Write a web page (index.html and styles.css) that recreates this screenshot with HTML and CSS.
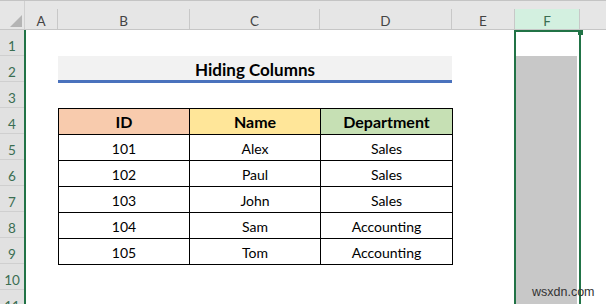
FILE: index.html
```html
<!DOCTYPE html>
<html>
<head>
<meta charset="utf-8">
<link rel="stylesheet" href="styles.css">
</head>
<body>
<div class="app">
  <div class="colhead">
    <div class="corner">
      <svg class="tri" width="12" height="12" viewBox="0 0 12 12"><polygon points="12,0 12,12 0,12" fill="#b4b4b4"/></svg>
    </div>
    <div class="ch w-a">A</div>
    <div class="ch w-b">B</div>
    <div class="ch w-c">C</div>
    <div class="ch w-d">D</div>
    <div class="ch w-e">E</div>
    <div class="ch w-f selhead">F</div>
    <div class="ch w-g"></div>
  </div>
  <div class="body">
    <div class="rowhead">
      <div class="rh">1</div>
      <div class="rh">2</div>
      <div class="rh">3</div>
      <div class="rh">4</div>
      <div class="rh">5</div>
      <div class="rh">6</div>
      <div class="rh">7</div>
      <div class="rh">8</div>
      <div class="rh">9</div>
      <div class="rh">10</div>
      <div class="rh">11</div>
    </div>
    <div class="sheet">
      <div class="title">Hiding Columns</div>
      <table class="data">
        <colgroup><col class="c1"><col class="c2"><col class="c3"></colgroup>
        <tr class="hdr"><th class="h-id">ID</th><th class="h-name">Name</th><th class="h-dept">Department</th></tr>
        <tr><td>101</td><td>Alex</td><td>Sales</td></tr>
        <tr><td>102</td><td>Paul</td><td>Sales</td></tr>
        <tr><td>103</td><td>John</td><td>Sales</td></tr>
        <tr><td>104</td><td>Sam</td><td>Accounting</td></tr>
        <tr><td>105</td><td>Tom</td><td>Accounting</td></tr>
      </table>
      <div class="sel">
        <div class="sel-blank"></div>
        <div class="sel-fill"></div>
        <div class="handle"></div>
      </div>
    </div>
  </div>
  <div class="wm">wsxdn.com</div>
</div>
</body>
</html>
```
FILE: styles.css
```css
html, body {
  margin: 0;
  padding: 0;
  background: #ffffff;
}
body {
  font-family: "Lato", "Liberation Sans", sans-serif;
  width: 606px;
  height: 304px;
  overflow: hidden;
}
.app {
  position: relative;
  width: 606px;
  height: 304px;
  overflow: hidden;
}
.colhead {
  display: flex;
  align-items: flex-end;
  height: 30px;
  box-sizing: border-box;
  background: #e6e6e6;
  border-top: 1px solid #c4c4c4;
  border-bottom: 1px solid #c6c6c6;
}
.corner {
  position: relative;
  width: 25px;
  align-self: stretch;
  box-sizing: border-box;
  border-right: 1px solid #d0d0d0;
  flex-shrink: 0;
}
.tri {
  position: absolute;
  left: 10px;
  top: 14px;
}
.ch {
  height: 20px;
  box-sizing: border-box;
  border-right: 1px solid #c8c8c8;
  display: flex;
  align-items: center;
  justify-content: center;
  padding-top: 3px;
  font-size: 13.5px;
  color: #444444;
  flex-shrink: 0;
}
.w-a { width: 33px; }
.w-b { width: 132px; }
.w-c { width: 130px; }
.w-d { width: 132px; }
.w-e { width: 63px; }
.w-f { width: 65px; }
.w-g { flex: 1; border-right: none; }
.selhead {
  background: #d3f0e0;
  color: #3a6e52;
}
.body {
  display: flex;
  height: 274px;
}
.rowhead {
  width: 24px;
  flex-shrink: 0;
  background: #e1e1e1;
  border-right: 2px solid #217346;
}
.rh {
  height: 26px;
  box-sizing: border-box;
  border-bottom: 1px solid #cfcfcf;
  display: flex;
  align-items: flex-end;
  justify-content: center;
  padding-bottom: 2px;
  font-size: 13.5px;
  line-height: 1;
  color: #3a6e52;
}
.sheet {
  flex: 1;
  display: grid;
  grid-template-columns: 32px 132px 130px 132px 63px 65px 1fr;
  grid-template-rows: repeat(11, 26px);
}
.title {
  grid-column: 2 / 5;
  grid-row: 2;
  align-self: start;
  height: 27px;
  box-sizing: border-box;
  background: #f2f2f2;
  border-bottom: 3px solid #4a72bd;
  display: flex;
  align-items: center;
  justify-content: center;
  padding-top: 3px;
  font-weight: 700;
  font-size: 17px;
  color: #000000;
}
.data {
  grid-column: 2 / 5;
  grid-row: 4 / 10;
  align-self: start;
  border-collapse: collapse;
  table-layout: fixed;
  width: 394px;
}
.c1 { width: 131px; }
.c2 { width: 131px; }
.c3 { width: 132px; }
.data tr { height: 26px; }
.data th, .data td {
  border: 1px solid #000000;
  padding: 0;
  text-align: center;
  vertical-align: middle;
  color: #000000;
}
.data td {
  font-size: 14px;
  padding-top: 1px;
}
.data th {
  font-size: 16px;
  font-weight: 700;
}
.h-id { background: #f8cbad; }
.h-name { background: #ffe699; }
.h-dept { background: #c6e0b4; }
.sel {
  grid-column: 6;
  grid-row: 1 / 12;
  position: relative;
  margin-left: -1px;
  margin-right: -1px;
  border: 2px solid #217346;
  border-bottom: none;
  display: flex;
  flex-direction: column;
  padding-right: 2px;
}
.sel-blank {
  height: 24px;
  flex-shrink: 0;
}
.sel-fill {
  flex: 1;
  background: #c8c8c8;
}
.handle {
  position: absolute;
  top: -2px;
  right: -4px;
  width: 5px;
  height: 5px;
  background: #217346;
}
.wm {
  position: absolute;
  left: 532px;
  top: 286px;
  font-family: "Liberation Sans", Arial, sans-serif;
  font-size: 12.5px;
  line-height: 1;
  color: #333333;
}
```
